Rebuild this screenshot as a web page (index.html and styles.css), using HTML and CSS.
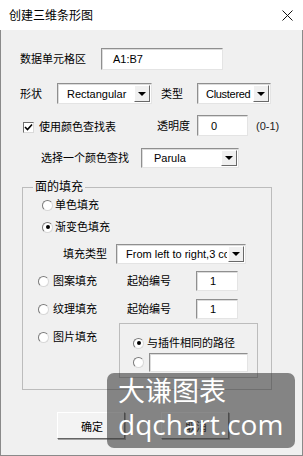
FILE: index.html
```html
<!DOCTYPE html>
<html lang="zh-CN">
<head>
    <meta charset="UTF-8">
    <title>创建三维条形图</title>
    <link rel="stylesheet" href="styles.css">
</head>
<body>
<div class="window">
    <div class="titlebar">
        <span class="title">创建三维条形图</span>
        <svg class="close" width="11" height="11" viewBox="0 0 11 11">
            <path d="M0.5 0.5 L10.5 10.5 M10.5 0.5 L0.5 10.5" stroke="#111" stroke-width="1"/>
        </svg>
    </div>

    <div class="content">
        <div class="row r1">
            <span class="label w-range">数据单元格区</span>
            <span class="textbox tb-range">A1:B7</span>
        </div>

        <div class="row r2">
            <span class="label w-shape">形状</span>
            <span class="combo cb-shape"><span class="combo-text">Rectangular</span><span class="combo-btn"></span></span>
            <span class="label w-type">类型</span>
            <span class="combo cb-type"><span class="combo-text">Clustered</span><span class="combo-btn"></span></span>
        </div>

        <div class="row r3">
            <span class="checkbox">
                <svg width="9" height="9" viewBox="0 0 9 9"><path d="M1 4 L3.5 6.5 L8 1.5" stroke="#000" stroke-width="1.6" fill="none"/></svg>
            </span>
            <span class="label w-lookup">使用颜色查找表</span>
            <span class="label w-alpha">透明度</span>
            <span class="textbox tb-alpha">0</span>
            <span class="label hint">(0-1)</span>
        </div>

        <div class="row r4">
            <span class="label w-pick">选择一个颜色查找</span>
            <span class="combo cb-map"><span class="combo-text">Parula</span><span class="combo-btn"></span></span>
        </div>

        <fieldset class="group">
            <legend>面的填充</legend>

            <div class="row g1">
                <span class="radio"></span>
                <span class="label">单色填充</span>
            </div>
            <div class="row g2">
                <span class="radio on"></span>
                <span class="label">渐变色填充</span>
            </div>
            <div class="row g3">
                <span class="label w-fill">填充类型</span>
                <span class="combo cb-fill"><span class="combo-text">From left to right,3 colors</span><span class="combo-btn"></span></span>
            </div>
            <div class="row g4">
                <span class="radio"></span>
                <span class="label w-opt">图案填充</span>
                <span class="label w-start">起始编号</span>
                <span class="textbox tb-num">1</span>
            </div>
            <div class="row g5">
                <span class="radio"></span>
                <span class="label w-opt">纹理填充</span>
                <span class="label w-start">起始编号</span>
                <span class="textbox tb-num">1</span>
            </div>
            <div class="row g6">
                <div class="pic-opt">
                    <span class="radio"></span>
                    <span class="label w-pic">图片填充</span>
                </div>
                <div class="subgroup">
                    <div class="row s1">
                        <span class="radio on"></span>
                        <span class="label">与插件相同的路径</span>
                    </div>
                    <div class="row s2">
                        <span class="radio"></span>
                        <span class="textbox tb-path"></span>
                    </div>
                </div>
            </div>
        </fieldset>

        <div class="buttons">
            <span class="button">确定</span>
            <span class="button">取消</span>
        </div>
    </div>

    <div class="watermark">
        <div class="wm-cn">大谦图表</div>
        <div class="wm-en">dqchart.com</div>
    </div>
</div>
</body>
</html>
```

FILE: styles.css
```css
* {
    box-sizing: border-box;
}
body {
    margin: 0;
    padding: 0;
    font-family: "Liberation Sans", "Noto Sans CJK SC", sans-serif;
    font-size: 11px;
    color: #000;
}
.window {
    position: relative;
    width: 303px;
    height: 456px;
    background: #f0f0f0;
    box-shadow: inset 1px 0 #8a8a8a, inset -1px 0 #8a8a8a, inset 0 -1px #8a8a8a;
    overflow: hidden;
}

/* title bar */
.titlebar {
    height: 30px;
    background: #fff;
    display: flex;
    align-items: center;
    justify-content: space-between;
    padding: 0 10px 0 9px;
}
.title {
    font-family: "Noto Sans CJK SC", sans-serif;
    font-size: 12px;
    line-height: 16px;
}

.content {
    padding-left: 20px;
}
.row {
    display: flex;
    align-items: center;
}
.label {
    line-height: 16px;
    white-space: nowrap;
    flex-shrink: 0;
}

/* text boxes and combos */
.textbox,
.combo {
    background: #fff;
    border: 1px solid;
    border-color: #8f8f8f #e4e4e4 #e4e4e4 #8f8f8f;
    box-shadow: inset 1px 1px #dcdcdc;
    flex-shrink: 0;
}
.textbox {
    display: flex;
    align-items: center;
    padding-left: 11px;
    height: 100%;
}
.combo {
    display: flex;
    align-items: stretch;
    height: 100%;
    overflow: hidden;
}
.combo-text {
    flex: 1;
    padding-left: 9px;
    display: flex;
    align-items: center;
    white-space: nowrap;
    overflow: hidden;
}
.combo-btn {
    width: 16px;
    flex-shrink: 0;
    margin: 1px;
    background: #f0f0f0;
    border: 1px solid;
    border-color: #fff #696969 #696969 #fff;
    display: flex;
    align-items: center;
    justify-content: center;
}
.combo-btn::after {
    content: "";
    border-left: 4px solid transparent;
    border-right: 4px solid transparent;
    border-top: 4px solid #000;
}

.r1 { height: 22px; margin-top: 18px; }
.w-range { width: 81px; }
.tb-range { width: 122px; }

.r2 { height: 21px; margin-top: 13px; }
.w-shape { width: 37px; }
.cb-shape { width: 95px; }
.w-type { width: 36px; margin-left: 9px; }
.cb-type { width: 74px; }
.cb-type .combo-text { padding-left: 8px; letter-spacing: -0.3px; }

.r3 { height: 21px; margin-top: 11px; }
.checkbox {
    width: 11px;
    height: 11px;
    margin-left: 3px;
    margin-top: 4px;
    background: #fff;
    border: 1px solid;
    border-color: #6d6d6d #dadada #dadada #6d6d6d;
    display: flex;
    align-items: center;
    justify-content: center;
}
.w-lookup { width: 118px; margin-left: 5px; margin-top: 2px; }
.w-alpha { width: 40px; }
.tb-alpha { width: 51px; padding-left: 13px; }
.hint { margin-left: 8px; color: #222; }

.r4 { height: 20px; margin-top: 12px; }
.w-pick { width: 100px; margin-left: 21px; }
.cb-map { width: 98px; }
.cb-map .combo-text { padding-left: 12px; }

/* group box */
.group {
    margin: 12px 0 0 2px;
    width: 250px;
    padding: 3px 0 11px 0;
    border: 1px solid #bcbcbc;
    min-width: 0;
}
.group legend {
    margin-left: 10px;
    padding: 0 2px;
    line-height: 14px;
    font-size: 12px;
}
.radio {
    width: 11px;
    height: 11px;
    border-radius: 50%;
    background: #fff;
    border: 1px solid;
    border-color: #7a7a7a #d8d8d8 #d8d8d8 #7a7a7a;
    display: flex;
    align-items: center;
    justify-content: center;
    flex-shrink: 0;
}
.radio.on::after {
    content: "";
    width: 4px;
    height: 4px;
    border-radius: 50%;
    background: #000;
}
.g1 { height: 16px; margin-left: 19px; gap: 2px; }
.g2 { height: 16px; margin-left: 19px; gap: 2px; margin-top: 6px; }
.g3 { height: 20px; margin-top: 9px; }
.w-fill { width: 53px; margin-left: 40px; }
.cb-fill { width: 130px; }
.g4 { height: 20px; margin-top: 7px; margin-left: 15px; }
.g5 { height: 20px; margin-top: 8px; margin-left: 15px; }
.w-opt { width: 74px; margin-left: 4px; }
.w-start { width: 69px; }
.tb-num { width: 42px; padding-left: 13px; }

.g6 { margin-top: 4px; margin-left: 15px; align-items: flex-start; }
.pic-opt {
    display: flex;
    align-items: center;
    height: 16px;
    margin-top: 6px;
}
.w-pic { width: 66px; margin-left: 4px; }
.subgroup {
    width: 139px;
    border: 1px solid #bcbcbc;
    padding: 11px 0 5px 13px;
}
.s1 { height: 16px; gap: 3px; }
.s2 { height: 19px; margin-top: 2px; gap: 5px; }
.tb-path { width: 99px; }

/* buttons */
.buttons {
    display: flex;
    gap: 36px;
    margin: 22px 0 0 37px;
}
.button {
    width: 68px;
    height: 27px;
    background: #f3f3f3;
    border: 1px solid;
    border-color: #fff #646464 #646464 #fff;
    box-shadow: 1px 1px #a0a0a0;
    display: flex;
    align-items: center;
    justify-content: center;
    padding-left: 2px;
}

/* watermark */
.watermark {
    position: absolute;
    left: 107px;
    top: 373px;
    width: 188px;
    height: 75px;
    border-radius: 7px;
    background: rgba(60, 60, 60, 0.6);
    color: #fff;
    padding-left: 11px;
}
.wm-cn {
    font-family: "Noto Sans CJK SC", sans-serif;
    font-size: 27px;
    line-height: 34px;
    letter-spacing: 0;
}
.wm-en {
    font-family: "Open Sans", sans-serif;
    font-size: 28px;
    line-height: 36px;
    margin-top: -1px;
}
```
